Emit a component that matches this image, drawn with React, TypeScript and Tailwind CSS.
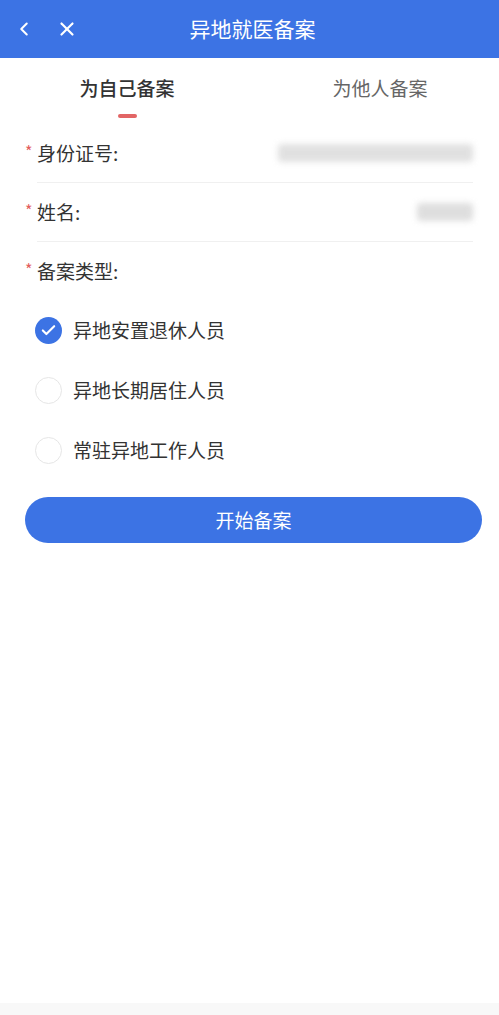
import { ChevronLeft, X, Check } from "lucide-react";

const options = [
  { id: "retire", label: "异地安置退休人员", checked: true },
  { id: "live", label: "异地长期居住人员", checked: false },
  { id: "work", label: "常驻异地工作人员", checked: false },
];

const Label = ({ text }: { text: string }) => (
  <div className="flex items-center">
    <span className="w-3 text-[16px] text-[#e35d5d] leading-none -mt-[5px]">*</span>
    <span className="text-[19px] text-[#333]">{text}</span>
  </div>
);

const App = () => {
  return (
    <div
      className="flex flex-col w-[499px] h-[1015px] bg-white overflow-hidden"
      style={{ fontFamily: '"Noto Sans CJK SC", "Noto Sans", sans-serif' }}
    >
      {/* Header */}
      <div className="relative flex items-center h-[58px] bg-[#3c73e4] shrink-0">
        <div className="flex items-center gap-[21px] pl-[13px] text-white">
          <ChevronLeft size={22} strokeWidth={2.2} />
          <X size={22} strokeWidth={2.4} />
        </div>
        <div className="absolute inset-0 flex items-center justify-center pointer-events-none">
          <span className="text-[21px] text-white ml-[6px]">异地就医备案</span>
        </div>
      </div>

      {/* Tabs */}
      <div className="flex h-[66px] shrink-0">
        <div className="w-[254px] flex flex-col items-center pt-[16px]">
          <span className="text-[19px] font-medium text-[#333] leading-[28px]">为自己备案</span>
          <div className="mt-[12px] w-[19px] h-[4px] rounded-full bg-[#e26565]" />
        </div>
        <div className="flex-1 flex flex-col items-center pt-[16px] pl-[7px]">
          <span className="text-[19px] text-[#666] leading-[28px]">为他人备案</span>
        </div>
      </div>

      {/* Form */}
      <div className="flex flex-col pl-[25px] pr-[26px]">
        <div className="flex items-center justify-between h-[59px] border-b border-[#f0f0f0] ml-[12px]">
          <div className="-ml-[12px]">
            <Label text="身份证号:" />
          </div>
          <div className="w-[195px] h-[18px] rounded bg-[#d9d9d9] blur-[3px] opacity-80" />
        </div>
        <div className="flex items-center justify-between h-[59px] border-b border-[#f0f0f0] ml-[12px]">
          <div className="-ml-[12px]">
            <Label text="姓名:" />
          </div>
          <div className="w-[56px] h-[18px] rounded bg-[#d6d6d6] blur-[3px] opacity-80" />
        </div>
        <div className="flex items-center h-[58px]">
          <Label text="备案类型:" />
        </div>

        <div className="flex flex-col pl-[10px]">
          {options.map((o) => (
            <div key={o.id} className="flex items-center h-[60px] gap-[11px]">
              {o.checked ? (
                <div className="w-[27px] h-[27px] rounded-full bg-[#3c73e4] flex items-center justify-center">
                  <Check size={17} strokeWidth={3} className="text-white" />
                </div>
              ) : (
                <div className="w-[27px] h-[27px] rounded-full border border-[#e6e6e6] bg-white" />
              )}
              <span className="text-[19px] text-[#333]">{o.label}</span>
            </div>
          ))}
        </div>

        <button className="mt-[17px] mr-[-9px] h-[46px] rounded-full bg-[#3c73e4] text-white text-[19px]">
          开始备案
        </button>
      </div>

      <div className="flex-1" />
      <div className="h-[12px] bg-[#f8f8f8] shrink-0" />
    </div>
  );
};

export default App;
